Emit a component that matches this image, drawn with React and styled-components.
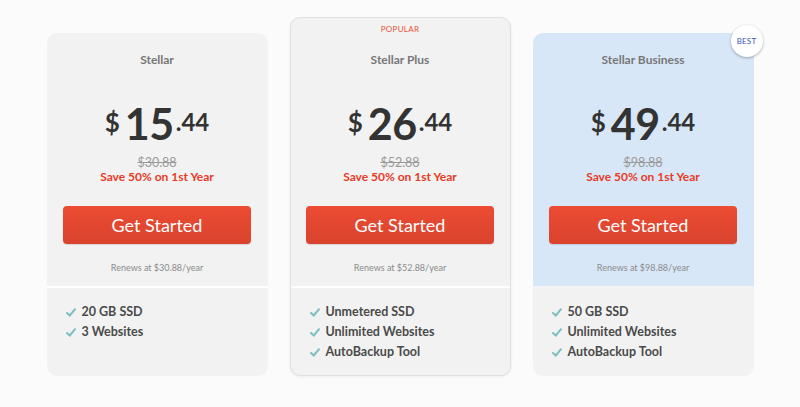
import React from 'react';
import styled, { createGlobalStyle } from 'styled-components';

const GlobalStyle = createGlobalStyle`
  html, body {
    margin: 0;
    padding: 0;
    background-color: #fbfbfb;
    font-family: Lato, "Open Sans", sans-serif;
  }
`;

const Page = styled.div`
  width: 800px;
  height: 407px;
  display: flex;
  justify-content: center;
  align-items: flex-end;
  gap: 22px;
  padding-bottom: 31px;
  box-sizing: border-box;
`;

const Card = styled.div`
  position: relative;
  width: 221px;
  height: ${(p) => (p.featured ? '359px' : '343px')};
  box-sizing: border-box;
  border-radius: 10px;
  background-color: #f2f2f2;
  display: flex;
  flex-direction: column;
  border: ${(p) => (p.featured ? '1px solid #e0e0e0' : 'none')};
  box-shadow: ${(p) => (p.featured ? '0 1px 3px rgba(0,0,0,0.06)' : 'none')};
`;

const Top = styled.div`
  display: flex;
  flex-direction: column;
  align-items: center;
  padding: ${(p) => (p.featured ? '6px 17px 12px' : '19px 17px 12px')};
  background-color: ${(p) => (p.blue ? '#d8e7f8' : 'transparent')};
  border-radius: 10px 10px 0 0;
`;

const Popular = styled.div`
  font-size: 8px;
  letter-spacing: 0.3px;
  color: #e8543a;
  line-height: 10px;
  margin-bottom: 18px;
`;

const Title = styled.div`
  font-size: 12px;
  font-weight: 700;
  color: #777;
  line-height: 16px;
`;

const Price = styled.div`
  display: flex;
  align-items: flex-start;
  margin-top: 35px;
  color: #333;
  font-weight: 700;
`;

const Currency = styled.span`
  font-size: 26px;
  line-height: 26px;
  margin-top: 6px;
  margin-right: 5px;
`;

const Amount = styled.span`
  font-size: 43px;
  line-height: 42px;
  letter-spacing: -0.5px;
`;

const Cents = styled.span`
  font-size: 24px;
  line-height: 24px;
  margin-top: 7px;
  margin-left: 2px;
`;

const OldPrice = styled.div`
  margin-top: 11px;
  font-size: 12.5px;
  line-height: 14px;
  color: #9a9a9a;
  text-decoration: line-through;
`;

const Save = styled.div`
  font-size: 12px;
  line-height: 14px;
  font-weight: 700;
  color: #e63b26;
`;

const Button = styled.div`
  margin-top: 22px;
  width: 188px;
  height: 38px;
  border-radius: 4px;
  background: linear-gradient(#ec4b33, #d9432e);
  box-shadow: 0 1px 1px rgba(0, 0, 0, 0.12);
  color: #fff;
  font-size: 18px;
  display: flex;
  align-items: center;
  justify-content: center;
  cursor: pointer;
`;

const Renews = styled.div`
  margin-top: 18px;
  font-size: 9px;
  line-height: 12px;
  color: #8a8a8a;
`;

const Features = styled.ul`
  list-style: none;
  margin: 0;
  flex: 1;
  padding: 14px 17px 14px 19px;
  border-top: 2px solid ${(p) => (p.blue ? '#f2f2f2' : '#fff')};
  border-radius: 0 0 10px 10px;
  box-sizing: border-box;
`;

const Feature = styled.li`
  display: flex;
  align-items: center;
  gap: 6px;
  font-size: 12.5px;
  line-height: 20px;
  font-weight: 700;
  color: #4a4a4a;
`;

const Badge = styled.div`
  position: absolute;
  top: -8px;
  right: -9px;
  width: 32px;
  height: 32px;
  border-radius: 50%;
  background: #fff;
  box-shadow: 0 1px 3px rgba(0, 0, 0, 0.3);
  display: flex;
  align-items: center;
  justify-content: center;
  font-size: 8px;
  color: #3a55b0;
  letter-spacing: 0.2px;
`;

function Check() {
  return (
    <svg width="10" height="9" viewBox="0 0 10 9">
      <path d="M1 5 L3.8 7.5 L9 1.2" fill="none" stroke="#7bbfc1" strokeWidth="2" strokeLinecap="round" />
    </svg>
  );
}

const plans = [
  {
    name: 'Stellar',
    amount: '15',
    old: '$30.88',
    features: ['20 GB SSD', '3 Websites'],
  },
  {
    name: 'Stellar Plus',
    amount: '26',
    old: '$52.88',
    featured: true,
    features: ['Unmetered SSD', 'Unlimited Websites', 'AutoBackup Tool'],
  },
  {
    name: 'Stellar Business',
    amount: '49',
    old: '$98.88',
    blue: true,
    features: ['50 GB SSD', 'Unlimited Websites', 'AutoBackup Tool'],
  },
];

export default function App() {
  return (
    <>
      <GlobalStyle />
      <Page>
        {plans.map((plan) => (
          <Card key={plan.name} featured={plan.featured}>
            {plan.blue && <Badge>BEST</Badge>}
            <Top featured={plan.featured} blue={plan.blue}>
              {plan.featured && <Popular>POPULAR</Popular>}
              <Title>{plan.name}</Title>
              <Price>
                <Currency>$</Currency>
                <Amount>{plan.amount}</Amount>
                <Cents>.44</Cents>
              </Price>
              <OldPrice>{plan.old}</OldPrice>
              <Save>Save 50% on 1st Year</Save>
              <Button>Get Started</Button>
              <Renews>Renews at {plan.old}/year</Renews>
            </Top>
            <Features blue={plan.blue}>
              {plan.features.map((f) => (
                <Feature key={f}>
                  <Check />
                  {f}
                </Feature>
              ))}
            </Features>
          </Card>
        ))}
      </Page>
    </>
  );
}
